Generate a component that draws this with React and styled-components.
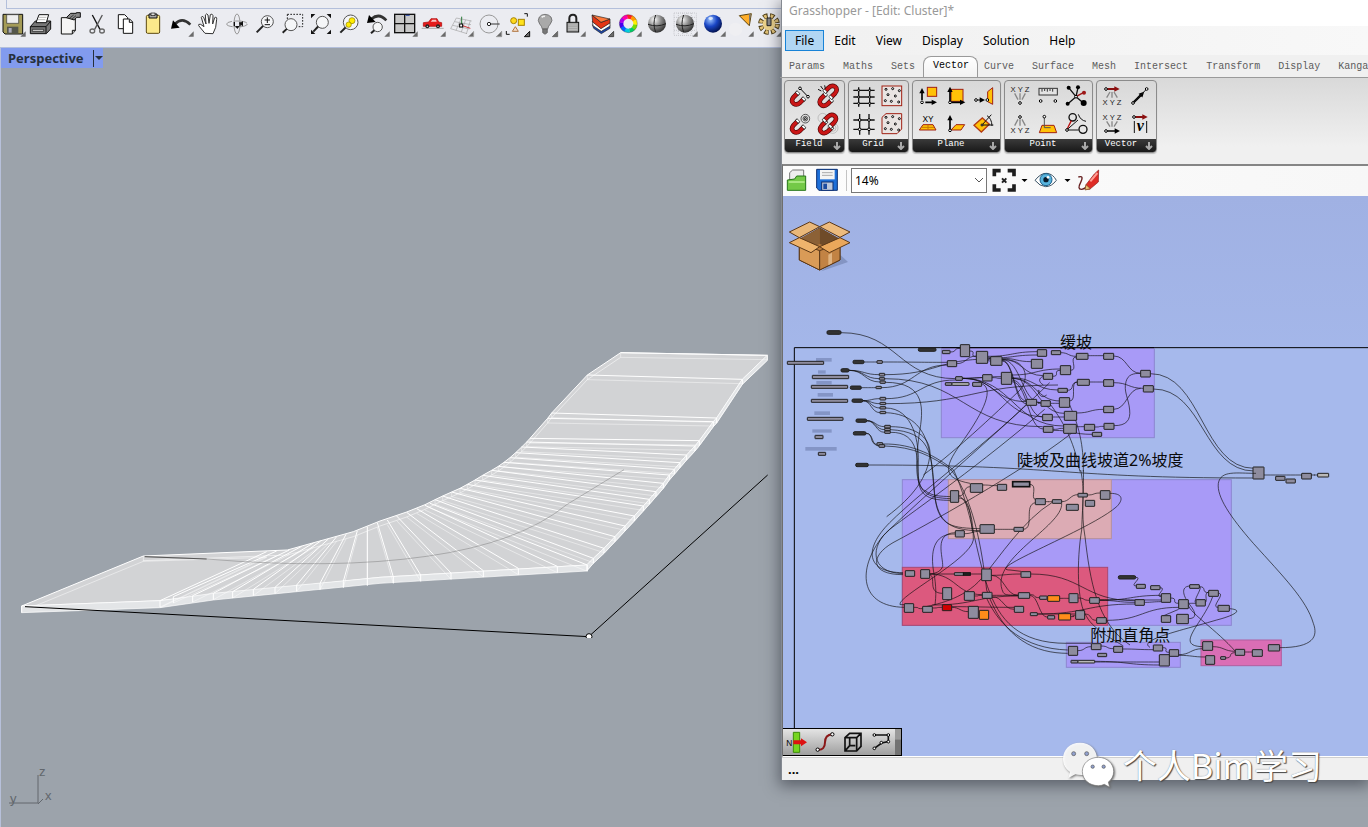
import React from 'react';
import styled, { createGlobalStyle } from 'styled-components';

const GlobalStyle = createGlobalStyle`
  *, *::before, *::after { box-sizing: border-box; }
  html, body { margin: 0; height: 100%; overflow: hidden; }
  body { font-family: "Noto Sans", "Noto Sans CJK SC", sans-serif; font-size: 13px; }
  button { font: inherit; color: inherit; border: 0; padding: 0; background: none; }
`;

const mono = '"Liberation Mono", "Noto Sans CJK SC", monospace';

const Desktop = styled.div`
  position: relative;
  display: flex;
  flex-direction: column;
  height: 100vh;
  overflow: hidden;
  background: #9ca3ab;
`;

/* ---------- modelling application ---------- */

const DockStrip = styled.div`
  height: 9px;
  flex: none;
  background: #ebecf1;
  padding-left: 6px;
  &::before {
    content: "";
    display: block;
    height: 9px;
    border-left: 1px solid #b3bfdb;
    border-bottom: 1px solid #b3bfdb;
  }
`;

const MainToolbar = styled.div`
  display: flex;
  flex: none;
  height: 39px;
  padding-top: 1px;
  background: #ebecf1;
  border-bottom: 1px solid #b3bfdb;
`;

const ToolButton = styled.button`
  flex: none;
  width: ${(p) => (p.$first ? 27 : 28)}px;
  height: 28px;
  display: flex;
  justify-content: flex-end;
  svg { flex: none; width: 28px; height: 28px; overflow: visible; }
`;

const Viewport = styled.main`
  flex: 1;
  position: relative;
  overflow: hidden;
  border-left: 1px solid #b7c0da;
`;

const ViewTitle = styled.div`
  display: inline-flex;
  align-items: center;
  height: 20px;
  padding-left: 7px;
  background: #829bee;
  color: #26303c;
  font-weight: 700;
`;

const ViewName = styled.span`
  width: 85px;
  line-height: 20px;
`;

const ViewMenuButton = styled.button`
  display: flex;
  align-items: center;
  width: 10px;
  height: 17px;
  border-left: 1px solid #26303c;
  svg { width: 9px; height: 5px; }
`;

const SceneDrawing = styled.svg`
  position: absolute;
  left: -1px;
  top: 0;
  width: 780px;
  height: 590px;
  pointer-events: none;
`;

const AxisDrawing = styled.svg`
  position: absolute;
  left: 0;
  bottom: 16px;
  width: 60px;
  height: 48px;
  text { font: 13px "Liberation Sans", sans-serif; fill: #62676d; }
`;

/* ---------- graph editor window ---------- */

const Window = styled.section`
  position: absolute;
  left: 781px;
  right: 0;
  top: 0;
  bottom: 47px;
  display: flex;
  flex-direction: column;
  background: #f0f0f0;
  border-left: 1px solid #858a92;
  box-shadow: 0 4px 14px 2px rgba(30, 34, 44, 0.5);
`;

const TitleBar = styled.header`
  flex: none;
  height: 26px;
  padding-left: 7px;
  line-height: 22px;
  background: #fff;
  color: #999;
  font-size: 12px;
  white-space: nowrap;
`;

const MenuBar = styled.nav`
  flex: none;
  display: flex;
  height: 29px;
  padding: 4px 3px;
  background: linear-gradient(90deg, #f0f0f0, #f8f8f8);
`;

const MenuItem = styled.button`
  height: 21px;
  padding: 0 9px;
  font-size: 12px;
  line-height: 19px;
  color: #000;
  border: 1px solid ${(p) => (p.$open ? '#1883d7' : 'transparent')};
  background: ${(p) => (p.$open ? '#b1d6f3' : 'transparent')};
`;

const TabBar = styled.div`
  flex: none;
  display: flex;
  height: 23px;
  margin-left: -2px;
  overflow: hidden;
  font-family: ${mono};
  font-size: 10px;
  border-bottom: 1px solid #9a9a9a;
`;

const Tab = styled.button`
  flex: none;
  padding: 0 9px;
  line-height: 23px;
  color: #5c5c5c;
  ${(p) => p.$active && `
    margin: 1px -3px 0 -1px;
    padding: 0 8px 0 9px;
    line-height: 18px;
    color: #000;
    background: linear-gradient(#fff, #f2f2f2);
    border: 1px solid #9a9a9a;
    border-bottom: 0;
    border-radius: 8px 8px 0 0;
    align-self: stretch;
    display: flex;
  `}
  &:last-child { padding-right: 0; }
`;

const Ribbon = styled.div`
  flex: none;
  display: flex;
  gap: 3px;
  height: 86px;
  padding: 2px;
  background: linear-gradient(#d9d9d9, #f0f0f0 80%);
`;

const Panel = styled.section`
  flex: none;
  height: 73px;
  padding: 1px 2px 0 1px;
  border: 1px solid #8b8b8b;
  border-radius: 4px;
  background: linear-gradient(#d8d8d8, #eee);
  overflow: hidden;
  box-shadow: 0 1px 1px rgba(0, 0, 0, 0.2);
`;

const PanelIcons = styled.div`
  display: grid;
  grid-template-columns: repeat(${(p) => p.$cols}, 28px);
  grid-auto-rows: 28px;
`;

const IconButton = styled.button`
  width: 28px;
  height: 28px;
  display: block;
  svg { display: block; width: 28px; height: 28px; overflow: visible; }
`;

const PanelFooter = styled.button`
  display: flex;
  width: calc(100% + 3px);
  margin: 1px -2px 0 -1px;
  height: 14px;
  padding-right: 3px;
  background: linear-gradient(#3a3a3a, #161616);
  color: #fff;
  font-family: ${mono};
  font-size: 9px;
  line-height: 11px;
  span { flex: 1; }
  svg { align-self: center; width: 8px; height: 8px; }
`;

const Workspace = styled.div`
  flex: 1;
  min-height: 0;
  display: flex;
  flex-direction: column;
  border-left: 1px solid #6e6e6e;
  border-top: 2px solid #858585;
  border-bottom: 1px solid #fff;
`;

const CanvasToolbar = styled.div`
  flex: none;
  display: flex;
  align-items: flex-start;
  height: 30px;
  padding-left: 3px;
  background: linear-gradient(90deg, #fcfcfc, #f7f7f7);
`;

const CanvasTool = styled.button`
  flex: none;
  width: ${(p) => p.$w}px;
  height: 28px;
  svg { display: block; width: 100%; height: 28px; }
`;

const Divider = styled.span`
  width: 1px;
  height: 21px;
  margin: 4px 4px 0;
  background: #c3c3c3;
`;

const ZoomField = styled.label`
  flex: none;
  position: relative;
  display: block;
  width: 136px;
  height: 25px;
  margin: 2px 3px 0 0;
  select {
    width: 100%;
    height: 100%;
    padding: 0 3px;
    appearance: none;
    border: 1px solid #777;
    border-radius: 0;
    background: #fff;
    color: #000;
    font: 12px "Noto Sans", sans-serif;
  }
  svg { position: absolute; right: 4px; top: 9px; width: 9px; height: 7px; pointer-events: none; }
`;

const Canvas = styled.div`
  flex: 1;
  min-height: 0;
  position: relative;
  overflow: hidden;
  background: linear-gradient(#a0b1e3, #a5b8eb 35%);
`;

const Graph = styled.svg`
  display: block;
  width: 585px;
  height: 560px;
  text {
    font: 400 48px "Noto Sans", "Noto Sans CJK SC", sans-serif;
    fill: #0a0a0a;
  }
`;

const QuickBar = styled.div`
  position: absolute;
  left: 0;
  bottom: 0;
  display: flex;
  height: 28px;
  border: 1px solid #000;
  border-left: 0;
  border-right: 0;
  background: linear-gradient(#e4e4e4, #9f9f9f);
`;

const QuickGrip = styled.span`
  width: 7px;
  border-right: 1px solid #000;
  background: linear-gradient(#9a9a9a 40%, #727272 41%);
`;

const StatusBar = styled.footer`
  flex: none;
  height: 23px;
  padding-left: 6px;
  line-height: 23px;
  border-top: 1px solid #cfcfcf;
  background: #f0f0f0;
  font-weight: 700;
`;

const Watermark = styled.div`
  position: absolute;
  right: 46px;
  bottom: 37px;
  display: flex;
  align-items: center;
  gap: 7px;
  color: #fff;
  font: 400 34px/50px "Noto Sans CJK SC", sans-serif;
  text-shadow: 1px 1px 1px #444, 0 0 1px #777;
  svg { width: 55px; height: 50px; filter: drop-shadow(1px 1px 1px #666); }
`;

/* ---------- main toolbar icons, drawn on an 84 unit cell ---------- */

const Corner = () => <path d="M80 64V80H64Z" fill="#6b6b6b" />;
const Lens = ({ x, y, r = 18, hx, hy }) => (
  <g>
    <circle cx={x} cy={y} r={r} fill="#f5f6f8" stroke="#555" strokeWidth="3" />
    <path d={`M${x - r * 0.7} ${y + r * 0.7}L${hx} ${hy}`} stroke="#222" strokeWidth="6" />
  </g>
);
const Sphere = ({ id, a, b, c, lines }) => (
  <g>
    <defs>
      <radialGradient id={id} cx=".35" cy=".28" r=".75">
        <stop offset="0" stopColor={a} /><stop offset=".5" stopColor={b} /><stop offset="1" stopColor={c} />
      </radialGradient>
    </defs>
    <circle cx="42" cy="41" r="27" fill={`url(#${id})`} />
    {lines && <path d="M38 15Q28 40 38 67M15 43Q42 53 69 41" fill="none" stroke="#222" strokeWidth="3" />}
  </g>
);
const wheel = ['#f22', '#f90', '#fe0', '#7d0', '#0c6', '#0cd', '#06f', '#40e', '#a0e', '#f0a'];

const tools = [
  ['Save', <g><path d="M12 13H71V72H18L12 66Z" fill="#a49b57" stroke="#111" strokeWidth="3" /><path d="M23 14H59V40H23Z" fill="#eee" stroke="#333" strokeWidth="2" /><path d="M24 50H58V71H24Z" fill="#55574c" /><path d="M29 54H38V68H29Z" fill="#aab" /><Corner /></g>],
  ['Print', <g stroke="#111" strokeWidth="3" strokeLinejoin="round"><path d="M10 50L25 33H71V57L58 71H10Z" fill="#777" /><path d="M10 50H57L71 34M57 50V70" fill="none" /><path d="M27 38L36 14H65L58 38Z" fill="#fff" /><path d="M36 22H58M33 29H55" stroke="#999" strokeWidth="2" /><path d="M16 58H50V64H16Z" fill="#ddd" strokeWidth="2" /></g>],
  ['Properties', <g stroke="#111" strokeWidth="3"><path d="M19 23H61V62L52 72H19Z" fill="#f5f5f5" /><path d="M61 61H52V72" fill="#bbb" /><path d="M34 23L47 10H64V8H76V22H65L58 30Z" fill="#888" /><path d="M44 24L56 15M51 27L63 17" strokeWidth="2" /></g>],
  ['Cut', <g fill="none" stroke="#111" strokeWidth="4"><path d="M28 15L51 58" /><path d="M58 15L35 58" stroke="#555" /><ellipse cx="28" cy="63" rx="7" ry="6" stroke="#666" /><ellipse cx="57" cy="63" rx="7" ry="6" stroke="#666" /></g>],
  ['Copy', <g fill="#fff" stroke="#111" strokeWidth="3"><path d="M22 14H41L50 23V56H22Z" /><path d="M37 27H56L65 36V70H37Z" /><path d="M55 28V37H65" fill="none" /></g>],
  ['Paste', <g stroke="#111" strokeWidth="3"><rect x="22" y="16" width="40" height="54" rx="4" fill="#fbe98b" stroke="#5d4a10" /><path d="M30 12H54V24H30Z" fill="#aaa" /><rect x="36" y="9" width="12" height="8" fill="#ddd" strokeWidth="2" /></g>],
  ['Undo', <g><path d="M24 42Q46 20 70 44" fill="none" stroke="#333" strokeWidth="8" /><path d="M12 56L18 31L38 53Z" fill="#000" /><Corner /></g>],
  ['Pan', <path d="M30 70L11 47Q9 41 17 43L27 50L19 22Q20 16 26 22L33 42L31 15Q35 8 39 15L42 40L46 14Q51 9 54 17L53 42L59 23Q66 19 65 28L62 52L54 71Z" fill="#fff" stroke="#333" strokeWidth="3" strokeLinejoin="round" />],
  ['Rotate view', <g fill="none" stroke="#999" strokeWidth="3"><ellipse cx="42" cy="42" rx="9" ry="30" /><ellipse cx="42" cy="42" rx="31" ry="9" strokeDasharray="40 6" /><path d="M34 36V49M51 36V49" stroke="#111" strokeWidth="4" /><path d="M60 33L48 41L60 49ZM36 48H50L43 57Z" fill="#111" stroke="none" /></g>],
  ['Zoom dynamic', <g><Lens x={49} y={35} hx={17} hy={67} /><path d="M49 22V39M41 30H57M41 44H57" stroke="#111" strokeWidth="3" /></g>],
  ['Zoom window', <g><Lens x={36} y={44} hx={11} hy={68} /><path d="M25 13H71V50H55M25 13V28" fill="none" stroke="#222" strokeWidth="3" strokeDasharray="5 4" /></g>],
  ['Zoom extents', <g><Lens x={46} y={37} hx={19} hy={65} /><path d="M12 12H25L12 25ZM72 12V25L59 12ZM12 72V59L25 72ZM72 72H59L72 59Z" fill="#111" /></g>],
  ['Zoom selected', <g><Lens x={47} y={37} r={22} hx={16} hy={68} /><circle cx="51" cy="32" r="9" fill="#ffec00" stroke="#8a7a00" strokeWidth="2" /><circle cx="41" cy="44" r="8" fill="#ffec00" stroke="#8a7a00" strokeWidth="2" /></g>],
  ['Undo view', <g><Lens x={44} y={51} r={14} hx={24} hy={70} /><path d="M25 27Q48 7 70 31" fill="none" stroke="#333" strokeWidth="8" /><path d="M12 39L18 15L38 36Z" fill="#000" /><Corner /></g>],
  ['Viewports', <g><rect x="11" y="13" width="60" height="55" fill="#c8c8c8" stroke="#111" strokeWidth="4" /><path d="M41 13V68M11 41H71" stroke="#111" strokeWidth="4" /><path d="M44 16H56" stroke="#24a" strokeWidth="3" /><Corner /></g>],
  ['Named views', <g><path d="M8 55H74" stroke="#aaa" strokeWidth="3" /><path d="M13 38L29 36L36 26H54L59 36L68 38V49H13Z" fill="#e51c1c" stroke="#a00" strokeWidth="2" /><path d="M35 35L40 29H51L53 35Z" fill="#f7c6c6" /><circle cx="25" cy="49" r="6" fill="#222" /><circle cx="57" cy="49" r="6" fill="#222" /><circle cx="25" cy="49" r="2" fill="#ddd" /><circle cx="57" cy="49" r="2" fill="#ddd" /><Corner /></g>],
  ['Construction plane', <g fill="none" stroke="#a3a3a3" strokeWidth="2"><path d="M28 24L11 56M42 27L27 61M56 29L43 66M70 32L58 72M28 24L74 33M23 35L72 44M17 46L67 57M11 56L60 71" /><path d="M44 43V20" stroke="#2a7a3a" strokeWidth="3" /><path d="M44 46L70 55" stroke="#c33" strokeWidth="3" /><rect x="38" y="42" width="9" height="9" fill="#fff" stroke="#000" strokeWidth="3" /><Corner /></g>],
  ['Object snap', <g fill="none" stroke="#999" strokeWidth="3"><circle cx="42" cy="42" r="27" /><path d="M42 42H74" stroke="#333" /><circle cx="42" cy="42" r="5" fill="#fff" stroke="#222" /><Corner /></g>],
  ['Select', <g fill="none" stroke="#111" strokeWidth="3"><circle cx="32" cy="32" r="9" fill="#ffd91c" stroke="#a78300" /><rect x="46" y="28" width="18" height="18" fill="#ffe21c" stroke="#a78300" /><path d="M37 50L46 64H28Z" fill="#f5ddc8" stroke="#b07542" /><path d="M64 11H73V20M10 63V73H20" /><Corner /></g>],
  ['Hide', <g stroke="#555" strokeWidth="2"><path d="M34 57Q32 48 26 42Q18 31 25 21Q31 13 42 13Q53 13 60 21Q67 31 58 42Q52 48 50 57Z" fill="#a9a9a9" /><path d="M35 57H49V68L42 73L35 68Z" fill="#777" /><path d="M32 22Q36 18 42 19" stroke="#eee" strokeWidth="5" fill="none" /><Corner /></g>],
  ['Lock', <g><path d="M31 39V25Q31 14 42 14Q52 14 52 25V39" fill="none" stroke="#222" strokeWidth="6" /><rect x="24" y="37" width="35" height="29" fill="#a5a5a5" stroke="#111" strokeWidth="3" /><path d="M28 45H55M28 52H55M28 59H55" stroke="#ccc" strokeWidth="2" /><Corner /></g>],
  ['Layers', <g stroke="#222" strokeWidth="2"><path d="M16 44L41 62L69 47V55L43 71L20 55Z" fill="#1c46ac" /><path d="M16 34L41 54L69 38V48L43 64L18 47Z" fill="#fff" /><path d="M15 15L42 37L69 27V39L42 56L17 36Z" fill="#e23616" /><path d="M15 15L42 37L69 27Z" fill="#ff7a3c" /><Corner /></g>],
  ['Object colour', <g>{wheel.map((c, i) => <circle key={c} cx="40" cy="41" r="21" fill="none" stroke={c} strokeWidth="12" strokeDasharray="14 118" transform={`rotate(${i * 36 - 100} 40 41)`} />)}<circle cx="40" cy="41" r="27" fill="none" stroke="#333" strokeWidth="1" /><Corner /></g>],
  ['Wireframe display', <Sphere id="sg1" a="#fff" b="#8a8a8a" c="#333" lines />],
  ['Shaded display', <g><path d="M9 9H76V76H9ZM9 22H76M9 35H76M9 48H76M9 61H76M22 9V76M35 9V76M48 9V76M61 9V76" fill="none" stroke="#c6c7cc" strokeWidth="3" strokeDasharray="3 3" /><Sphere id="sg2" a="#fff" b="#8a8a8a" c="#333" lines /><Corner /></g>],
  ['Render', <g><Sphere id="sg3" a="#9cc4ff" b="#1945c4" c="#03124e" /><ellipse cx="35" cy="25" rx="7" ry="5" fill="#fff" opacity=".7" /><Corner /></g>],
  ['Directional light', <g><ellipse cx="26" cy="58" rx="20" ry="20" fill="#efeff2" /><path d="M37 17L73 11L67 47Z" fill="#ffae2a" stroke="#5b430d" strokeWidth="3" /><path d="M66 14L72 12L66 46Z" fill="#777" /><Corner /></g>],
  ['Options', <g><circle cx="42" cy="42" r="25" fill="none" stroke="#4a3a13" strokeWidth="15" strokeDasharray="13 7" /><circle cx="42" cy="42" r="25" fill="none" stroke="#e3c377" strokeWidth="10" strokeDasharray="8 12" strokeDashoffset="-2" /><circle cx="42" cy="42" r="19" fill="#ecd28a" /><path d="M36 24H48V47H36Z" fill="#888" stroke="#222" strokeWidth="3" /><Corner /></g>],
];

/* ---------- component icons ---------- */

const Dot = ({ x, y, r = 4 }) => <circle cx={x} cy={y} r={r} fill="#fff" stroke="#000" strokeWidth="3" />;
const Magnet = ({ x = 0, y = 0, flip }) => {
  const d = 'M34 34L23 45Q13 57 23 65Q32 71 42 62L52 52';
  return (
    <g fill="none" transform={`translate(${x} ${y})${flip ? ' rotate(180 42 42)' : ''}`}>
      <path d={d} stroke="#4b0808" strokeWidth="14" />
      <path d={d} stroke="#c91616" strokeWidth="10" />
      <path d="M38 30L32 36M56 48L50 54" stroke="#222" strokeWidth="14" />
      <path d="M37 31L33 35M55 49L51 53" stroke="#fff" strokeWidth="10" />
    </g>
  );
};
const Arrow = ({ x1, y1, x2, y2, c = '#000', w = 5 }) => {
  const a = (Math.atan2(y2 - y1, x2 - x1) * 180) / Math.PI;
  return (
    <g>
      <path d={`M${x1} ${y1}L${x2} ${y2}`} stroke={c} strokeWidth={w} />
      <path d="M8 0L-8 -8V8Z" fill={c} transform={`translate(${x2} ${y2}) rotate(${a})`} />
    </g>
  );
};
const Letters = ({ y }) => (
  <text x="42" y={y} textAnchor="middle" fontFamily="Liberation Sans, sans-serif" fontSize="23" fill="#222">X Y Z</text>
);
const gridDots = [[24, 22], [44, 20], [64, 26], [30, 38], [52, 42], [22, 56], [40, 58], [62, 60]];
const red = '#a12013';
const amber = '#ffc107';
const Rays = ({ y1, y2 }) => (
  <path d={`M42 ${y1}V${y2}M26 ${y1}L36 ${y2}M58 ${y1}L48 ${y2}`} fill="none" stroke="#888" strokeWidth="4" />
);
const RaysUp = ({ y1, y2 }) => (
  <path d={`M42 ${y1}V${y2}M36 ${y1}L26 ${y2}M48 ${y1}L58 ${y2}`} fill="none" stroke="#888" strokeWidth="4" />
);

const panels = [
  { name: 'Field', cols: 2, icons: [
    ['Line charge', <g><Magnet /><path d="M42 19L66 44" stroke="#000" strokeWidth="3" /><Dot x={42} y={19} /><Dot x={66} y={44} /></g>],
    ['Break field', <g><Magnet x={-1} y={4} /><Magnet flip x={2} y={-5} /><path d="M12 22L22 27M20 12L27 22M32 10L34 20" stroke="#111" strokeWidth="3" /></g>],
    ['Point charge', <g><g fill="none" stroke="#555" strokeWidth="3"><circle cx="58" cy="26" r="13" /><circle cx="58" cy="26" r="7" /></g><Dot x={58} y={26} r={3} /><Magnet /></g>],
    ['Merge fields', <g><g fill="none" stroke="#aaa" strokeWidth="2"><circle cx="26" cy="24" r="14" /><circle cx="56" cy="54" r="16" /><circle cx="56" cy="54" r="10" /></g><Magnet y={2} /><Magnet flip y={-2} /></g>],
  ] },
  { name: 'Grid', cols: 2, icons: [
    ['Rectangular grid', <g fill="none" stroke="#111" strokeWidth="4"><path d="M10 25H74M10 45H74M10 64H74M26 16V74M59 16V74" />{[25, 45, 64].map((y) => <g key={y}><Dot x={26} y={y} r={3} /><Dot x={59} y={y} r={3} /></g>)}</g>],
    ['Populate 2D', <g><rect x="12" y="12" width="59" height="59" fill="#e9e4e2" stroke={red} strokeWidth="3" />{gridDots.map(([x, y]) => <Dot key={x} x={x} y={y} r={3} />)}</g>],
    ['Square grid', <g fill="none" stroke="#111" strokeWidth="4"><path d="M10 30H74M10 58H74M29 12V74M57 12V74" /><Dot x={29} y={30} /><Dot x={57} y={30} /><Dot x={29} y={58} /><Dot x={57} y={58} /></g>],
    ['Populate 3D', <g><path d="M24 11H71V57L57 71H12V22Z" fill="#e9e4e2" stroke={red} strokeWidth="3" />{gridDots.map(([x, y]) => <Dot key={x} x={x} y={y} r={3} />)}</g>],
  ] },
  { name: 'Plane', cols: 3, icons: [
    ['Construct plane', <g><rect x="40" y="16" width="28" height="27" fill={amber} stroke={red} strokeWidth="3" /><Arrow x1={24} y1={54} x2={24} y2={26} /><Arrow x1={34} y1={61} x2={61} y2={61} /><Dot x={24} y={61} /></g>],
    ['Deconstruct plane', <g><rect x="27" y="22" width="36" height="36" fill={amber} stroke={red} strokeWidth="3" /><Arrow x1={24} y1={61} x2={24} y2={22} /><Arrow x1={24} y1={61} x2={62} y2={61} /><Dot x={24} y={61} /></g>],
    ['Plane normal', <g><path d="M53 29L68 17V67L53 59Z" fill={amber} stroke={red} strokeWidth="3" /><Arrow x1={18} y1={54} x2={37} y2={54} w={3} /><Dot x={18} y={54} /><Dot x={52} y={54} /></g>],
    ['XY plane', <g><text x="42" y="36" textAnchor="middle" fontFamily="Liberation Sans, sans-serif" fontSize="25">XY</text><path d="M27 44H57L66 60H16Z" fill={amber} stroke={red} strokeWidth="3" /><path d="M24 52H60M42 44V60" stroke="#c77600" strokeWidth="3" /></g>],
    ['Plane origin', <g><path d="M42 44H68L57 60H27Z" fill={amber} stroke={red} strokeWidth="3" /><Arrow x1={24} y1={61} x2={24} y2={23} /><Dot x={24} y={61} /></g>],
    ['Rotate plane', <g><path d="M12 46L37 24L58 43L34 66Z" fill={amber} stroke="#b33b12" strokeWidth="4" /><path d="M36 45L64 14M36 45H70M51 17Q65 25 66 48" fill="none" stroke="#111" strokeWidth="3" /><Dot x={36} y={45} r={3} /></g>],
  ] },
  { name: 'Point', cols: 3, icons: [
    ['Construct point', <g><Letters y={30} /><Rays y1={34} y2={53} /><Dot x={42} y={63} /></g>],
    ['Distance', <g><rect x="15" y="19" width="55" height="20" fill="#e3e3e3" stroke="#333" strokeWidth="3" /><path d="M24 21V29M32 21V27M40 21V29M48 21V27M56 21V29" stroke="#333" strokeWidth="3" /><Dot x={20} y={57} /><Dot x={64} y={57} /></g>],
    ['Closest point', <g><path d="M42 44L20 17M42 44L48 17M42 44L17 66M42 44L64 63" stroke="#111" strokeWidth="4" /><path d="M42 44L64 32" stroke="#9d1717" strokeWidth="4" />{[[20, 17], [48, 16], [17, 65]].map(([x, y]) => <circle key={x} cx={x} cy={y} r="6" />)}<circle cx="65" cy="63" r="9" /><circle cx="66" cy="32" r="6" fill="#9d1717" /><Dot x={42} y={44} /></g>],
    ['Deconstruct point', <g><Dot x={42} y={21} /><RaysUp y1={28} y2={47} /><Letters y={68} /></g>],
    ['Pull point', <g><path d="M24 46H60L68 68H16Z" fill={amber} stroke={red} strokeWidth="3" /><path d="M31 20V53H50" fill="none" stroke="#555" strokeWidth="3" /><Dot x={31} y={20} /></g>],
    ['Project point', <g fill="none" stroke="#111" strokeWidth="4"><circle cx="32" cy="22" r="11" /><circle cx="63" cy="58" r="12" /><path d="M14 60L28 32" stroke="#b11" /><path d="M14 60L48 30M14 60H50M49 13Q55 31 72 34" strokeWidth="3" /><Dot x={15} y={60} /></g>],
  ] },
  { name: 'Vector', cols: 2, icons: [
    ['Vector XYZ', <g><Arrow x1={24} y1={21} x2={57} y2={21} c="#8b1010" w={6} /><Dot x={24} y={21} /><RaysUp y1={30} y2={47} /><Letters y={69} /></g>],
    ['Vector 2Pt', <g><Arrow x1={21} y1={63} x2={49} y2={35} w={7} /><path d="M21 63L62 21" stroke="#111" strokeWidth="3" /><Dot x={21} y={63} /><Dot x={62} y={21} /></g>],
    ['Deconstruct vector', <g><Letters y={30} /><Rays y1={34} y2={50} /><Arrow x1={24} y1={63} x2={58} y2={63} /><Dot x={24} y={63} /></g>],
    ['Vector length', <g><Arrow x1={24} y1={21} x2={57} y2={21} c="#8b1010" w={6} /><Dot x={24} y={21} /><path d="M25 33V69M62 33V69" stroke="#111" strokeWidth="3" /><text x="43" y="64" textAnchor="middle" fontFamily="Liberation Serif, serif" fontStyle="italic" fontWeight="700" fontSize="48">v</text></g>],
  ] },
];

const quickIcons = [
  ['Named input', <g><text x="10" y="50" fontFamily="Liberation Sans, sans-serif" fontSize="25">N</text><path d="M31 10H50V70H31Z" fill="#76d520" stroke="#3c8c08" strokeWidth="3" /><path d="M31 34H54V28L72 40L54 52V46H31Z" fill="#d11" /></g>],
  ['Curve', <g><path d="M20 62Q42 64 42 40Q42 18 64 16" fill="none" stroke="#8a1818" strokeWidth="6" /><Dot x={20} y={62} r={5} /><Dot x={64} y={16} r={5} /></g>],
  ['Box', <path d="M18 26L32 13H66V52L53 66H18ZM18 26H53V66M53 26L66 13M32 28V50H49M32 50L19 65" fill="none" stroke="#111" strokeWidth="5" />],
  ['Polyline', <g><path d="M22 18H64V38L44 42L22 58" fill="none" stroke="#111" strokeWidth="5" /><Dot x={22} y={18} /><Dot x={64} y={18} /><Dot x={64} y={38} /><Dot x={43} y={41} /><Dot x={22} y={58} /></g>],
];

/* ---------- node graph, three drawing units to a screen pixel ---------- */

const wire = ([x1, y1, x2, y2]) => {
  const k = Math.max(Math.abs(x2 - x1) / 2, 24);
  return `M${x1} ${y1}C${x1 + k} ${y1} ${x2 - k} ${y2} ${x2} ${y2}`;
};

const fills = { grey: '#8e8c9e', dark: '#333', orange: '#ff8c1a', red: '#d10000', light: '#b9b8b8' };

const Nodes = ({ items, fill = 'grey' }) => items.map(([x, y, w, h, f]) => (
  <rect key={`${x}-${y}`} x={x} y={y} width={w} height={h} rx={fill === 'dark' ? 4 : 1} fill={fills[f || fill]} stroke="#222" strokeWidth="3" />
));
const Wires = ({ items, extra }) => (
  <g fill="none" stroke="#111" strokeOpacity=".66" strokeWidth="3">
    {items.map((w) => <path key={w.join()} d={wire(w)} />)}
    {extra && <path d={extra} />}
  </g>
);

const inputs = {
  pills: [[141, 32, 42, 11], [415, 84, 53, 10], [219, 121, 33, 10], [183, 146, 24, 10], [211, 198, 33, 10], [216, 237, 32, 10], [228, 297, 32, 10], [220, 335, 38, 10], [227, 430, 38, 10]],
  relays: [[291, 122, 16, 8], [298, 160, 16, 8], [298, 173, 16, 7], [300, 183, 16, 7], [288, 199, 16, 7], [300, 232, 17, 8], [300, 247, 17, 7], [300, 260, 17, 7], [300, 274, 17, 7], [314, 316, 17, 8], [314, 325, 17, 7], [314, 333, 17, 7], [291, 368, 17, 8], [297, 374, 17, 8]],
  sliders: [[22, 124, 109, 9], [97, 166, 109, 10], [94, 196, 109, 9], [94, 238, 109, 9], [82, 292, 107, 9], [105, 346, 24, 10], [115, 397, 22, 9]],
  notes: [[108, 114, 47, 11], [114, 151, 23, 10], [109, 183, 46, 10], [113, 219, 46, 11], [103, 274, 47, 11], [97, 328, 58, 10], [76, 381, 94, 11]],
  wires: [
    [183, 38, 527, 176], [252, 126, 291, 126], [307, 126, 503, 127], [207, 151, 298, 164], [207, 151, 298, 176], [207, 151, 300, 186],
    [244, 203, 288, 203], [304, 203, 503, 135], [314, 164, 630, 117], [314, 176, 788, 320], [248, 242, 300, 236], [248, 242, 300, 251],
    [248, 242, 300, 264], [248, 242, 300, 278], [260, 302, 314, 320], [260, 302, 314, 329], [260, 302, 314, 337], [258, 340, 291, 373],
    [258, 340, 297, 378], [317, 251, 834, 195], [317, 236, 527, 180], [265, 435, 1419, 474],
  ],
  extra: 'M316 187C440 187 430 270 418 340C404 440 408 500 435 512C460 530 480 528 512 530M317 264C400 264 420 370 414 440C412 520 440 533 512 536M317 278C470 284 450 440 466 540C478 620 520 624 600 626M331 320C420 320 450 360 450 400C445 470 400 530 320 590M331 329C450 335 455 400 462 500C468 600 500 632 600 632M331 337C420 335 412 420 415 480C420 530 450 541 512 541M309 372C400 370 470 410 521 450M314 378C400 380 460 410 514 450',
};

const upper = {
  nodes: [[37, 76, 23, 10], [91, 59, 28, 36], [52, 107, 28, 18], [139, 79, 34, 36], [182, 95, 34, 26], [77, 155, 20, 11], [46, 173, 20, 8], [66, 173, 51, 8, 'light'], [128, 172, 27, 12], [158, 149, 28, 19], [214, 142, 31, 36], [322, 74, 28, 20], [364, 77, 28, 12], [304, 103, 34, 27], [340, 145, 28, 18], [391, 122, 31, 27], [439, 85, 35, 18], [521, 85, 30, 18], [632, 136, 29, 20], [640, 182, 30, 19], [442, 163, 36, 18], [521, 164, 30, 20], [384, 190, 28, 12], [289, 223, 31, 18], [333, 227, 28, 17], [388, 218, 31, 29], [521, 244, 30, 19], [403, 259, 37, 27], [338, 268, 29, 19], [401, 298, 38, 27], [340, 304, 29, 18], [463, 298, 31, 18], [522, 295, 30, 18], [487, 322, 28, 12]],
  wires: [
    [60, 81, 91, 70], [80, 116, 139, 93], [119, 78, 139, 95], [97, 160, 158, 158], [173, 97, 182, 108], [173, 94, 322, 80], [173, 100, 322, 90], [216, 100, 304, 110], [216, 103, 340, 152], [216, 106, 289, 228], [216, 108, 289, 236], [216, 104, 333, 233],
    [245, 158, 384, 195], [245, 160, 391, 228], [245, 150, 391, 132], [245, 165, 338, 276], [245, 170, 340, 312], [245, 160, 403, 265], [320, 232, 333, 235], [361, 235, 388, 235], [97, 160, 289, 230], [97, 160, 338, 275], [97, 160, 401, 303], [97, 160, 214, 155],
    [392, 83, 439, 94], [422, 136, 439, 96], [368, 154, 391, 136], [474, 92, 521, 92], [551, 93, 632, 145], [478, 171, 521, 171], [551, 173, 640, 190], [412, 196, 442, 172], [419, 228, 442, 170], [440, 264, 521, 253], [551, 253, 632, 190], [439, 305, 463, 305], [494, 306, 522, 304], [369, 313, 401, 310], [369, 276, 403, 276], [369, 316, 487, 328], [186, 158, 214, 160],
  ],
  extra: 'M155 176C190 190 170 250 90 360C40 430 40 460 120 475M552 302C590 302 602 285 599 255C596 220 580 200 588 170C594 148 610 145 632 145M419 240C460 330 460 400 460 440M361 238C430 330 440 400 450 440M216 104C290 100 300 160 270 195C150 310 60 390 -20 450M340 180C325 170 325 160 340 154M329 200C320 180 325 230 350 210',
};

const middle = {
  nodes: [[181, 62, 25, 35], [241, 41, 37, 26], [322, 43, 28, 18], [436, 86, 30, 18], [487, 89, 28, 11], [529, 103, 36, 18], [564, 70, 28, 11], [586, 91, 28, 18], [631, 62, 29, 26], [270, 164, 43, 26], [372, 172, 28, 12], [196, 182, 27, 19], [46, 302, 28, 17], [92, 299, 27, 26], [193, 308, 28, 8], [275, 297, 29, 35], [393, 305, 29, 17], [158, 353, 27, 36], [223, 365, 30, 26], [277, 367, 29, 18], [385, 368, 34, 17], [449, 378, 22, 10], [473, 377, 36, 17, 'orange'], [537, 371, 27, 27], [599, 383, 29, 17], [43, 401, 28, 26], [98, 409, 29, 18], [157, 404, 28, 18, 'red'], [235, 409, 30, 36], [268, 421, 28, 27, 'orange'], [373, 409, 28, 18], [421, 428, 21, 9], [473, 437, 21, 10], [506, 431, 36, 19, 'orange'], [557, 422, 27, 26], [620, 443, 29, 17]],
  wires: [
    [206, 78, 241, 50], [278, 45, 322, 47], [466, 95, 487, 95], [515, 95, 564, 74], [592, 75, 631, 69], [313, 178, 372, 178], [223, 191, 270, 184],
    [119, 312, 275, 312], [304, 316, 393, 312], [304, 316, 385, 376], [253, 378, 277, 376], [306, 376, 385, 376], [419, 374, 449, 383], [419, 376, 473, 442], [509, 385, 537, 385], [564, 384, 599, 391], [71, 412, 98, 416], [127, 414, 157, 412], [185, 412, 235, 425], [306, 380, 373, 418], [185, 410, 373, 412], [127, 405, 385, 378], [442, 432, 557, 432], [542, 440, 557, 437], [584, 432, 620, 451], [422, 312, 735, 392], [119, 312, 277, 374],
    [628, 391, 735, 397], [628, 389, 814, 390], [628, 391, 814, 376], [442, 432, 735, 402], [649, 451, 866, 412],
  ],
  extra: 'M419 43C445 43 420 86 436 88M400 178C435 175 400 105 436 98M660 70C700 70 700 90 680 110C600 180 280 300 360 300L393 304M487 97C400 150 330 260 275 325C220 390 130 405 98 412M515 100C520 170 290 270 340 368C345 376 360 376 385 376M206 76C240 100 250 150 250 210C240 270 20 380 30 404H43M196 192C140 190 120 230 130 300C140 350 138 380 135 405M196 188C130 190 160 260 158 290Q150 310 119 312M119 314C140 320 110 370 158 370M206 84C245 84 240 150 248 188M191 0C300 240 240 520 530 520H605M184 0C260 100 280 280 290 360C340 510 440 550 533 550M572 0C584 60 578 90 575 180C560 270 560 400 590 440C610 480 690 520 700 528M580 0C583 60 572 130 585 200C600 330 620 460 720 525M290 385C330 470 400 535 533 540',
};

const lower = {
  nodes: [[259, 103, 27, 12], [302, 107, 28, 12], [334, 131, 28, 26], [255, 149, 28, 17], [386, 149, 29, 27], [438, 149, 28, 19], [419, 104, 29, 11], [476, 121, 29, 18], [504, 166, 34, 18], [334, 197, 28, 20], [380, 193, 35, 28], [55, 289, 28, 27], [124, 281, 29, 18], [191, 289, 27, 18], [143, 310, 27, 10], [63, 331, 21, 8], [84, 331, 50, 8, 'light'], [310, 285, 28, 18], [358, 299, 28, 20], [328, 314, 30, 34], [458, 275, 30, 26], [467, 317, 27, 26], [512, 320, 15, 8], [556, 298, 28, 18], [607, 299, 30, 20], [655, 284, 34, 19]],
  wires: [
    [257, 82, 259, 108], [330, 113, 334, 140], [362, 144, 386, 160], [283, 157, 334, 155], [415, 160, 438, 160], [448, 110, 476, 128], [505, 130, 504, 172], [83, 302, 124, 290], [153, 288, 191, 296], [218, 297, 310, 299], [338, 293, 358, 307], [134, 334, 328, 345], [134, 336, 328, 336], [386, 314, 458, 296], [386, 316, 467, 321], [488, 290, 556, 304], [527, 324, 556, 308], [584, 306, 607, 306],
  ],
  extra: 'M488 140C460 220 370 288 458 290M538 176C590 180 540 200 500 210C400 240 260 270 300 292M689 293C790 293 805 260 790 220C770 150 700 80 610 -20C540 -100 500 -160 505 -200C512 -240 560 -230 618 -230M419 108C390 110 400 140 420 165C440 190 440 206 415 206M448 110C460 110 430 150 436 158M415 165C420 190 500 240 556 304M386 178L334 200M466 158C474 150 460 130 476 126',
};

/* wires that leave the upper cluster and loop back into the two lower ones */
const returnWires = 'M740 615C640 720 420 880 320 980C240 1060 250 1130 360 1130M880 700C760 800 480 960 330 1040C260 1080 260 1136 360 1136M800 560C680 680 420 900 300 1020C220 1120 230 1232 364 1234M785 640C600 800 400 940 320 1000C260 1050 260 1130 360 1133';

function GraphDrawing() {
  return (
    <Graph viewBox="0 0 1755 1680" role="img" aria-label="Node graph">
      <path d="M34 1680V455H1755V1680Z" fill="#a6b9ec" />
      <path d="M34 1680V455H1755" fill="none" stroke="#000" strokeWidth="3" />
      <g strokeWidth="3">
        <rect x="475" y="457" width="639" height="268" fill="#a89af7" stroke="#8c86cf" />
        <rect x="358" y="851" width="987" height="437" fill="#a89af7" stroke="#8c86cf" />
        <rect x="496" y="851" width="489" height="177" fill="#dcabb4" stroke="#b5909b" />
        <rect x="358" y="1114" width="616" height="174" fill="#dc597e" stroke="#a84a74" />
        <rect x="850" y="1339" width="342" height="75" fill="#a89af7" stroke="#8c86cf" />
        <rect x="1254" y="1332" width="241" height="77" fill="#da6eb5" stroke="#b05f9f" />
      </g>
      <path d="M475 455H1114" stroke="#000" strokeWidth="3" />
      <Wires items={[]} extra={returnWires} />
      <g transform="translate(-9 372)">
        <Wires items={inputs.wires} extra={inputs.extra} />
        <g fill="#8495c6">{inputs.notes.map(([x, y, w, h]) => <rect key={y} x={x} y={y} width={w} height={h} />)}</g>
        <Nodes items={inputs.sliders} />
        <Nodes items={inputs.relays} />
        <Nodes items={inputs.pills} fill="dark" />
      </g>
      <g transform="translate(441 387)">
        <Wires items={upper.wires} extra={upper.extra} />
        <Wires items={[[661, 146, 972, 430], [670, 192, 972, 438]]} />
        <Nodes items={upper.nodes} />
        <Nodes items={[[969, 426, 33, 36], [1037, 454, 28, 12], [1068, 462, 28, 12], [1115, 445, 29, 17]]} />
        <Nodes items={[[1163, 445, 33, 11, 'light']]} />
        <Wires items={[[1002, 450, 1115, 450], [1144, 450, 1163, 450]]} />
      </g>
      <g transform="translate(321 822)">
        <Wires items={middle.wires} extra={middle.extra} />
        <Nodes items={middle.nodes} />
        <rect x="368" y="35" width="51" height="15" fill="#8e8c9e" stroke="#111" strokeWidth="5" />
        <rect x="220" y="308" width="21" height="8" fill="#222" stroke="#111" strokeWidth="3" />
      </g>
      <g transform="translate(801 1062)">
        <Wires items={lower.wires} extra={lower.extra} />
        <Nodes items={lower.nodes} />
        <Nodes items={[[205, 77, 52, 10]]} fill="dark" />
      </g>
      <text x="831" y="455">缓坡</text>
      <text x="702" y="809">陡坡及曲线坡道2%坡度</text>
      <text x="922" y="1335">附加直角点</text>
    </Graph>
  );
}

/* ---------- ramp model ---------- */

const fanRibs = [
  [800, 65, 480, 212], [830, 63, 520, 200], [868, 60, 578, 197], [905, 49, 640, 190], [940, 39, 698, 185], [962, 33, 760, 178], [985, 27, 825, 172], [1010, 20, 890, 165], [1038, 13, 960, 160],
  [1072, 2, 1030, 154], [1102, -10, 1102, 148], [1132, -22, 1180, 141], [1162, -30, 1262, 135], [1190, -42, 1353, 129], [1220, -53, 1450, 122], [1250, -64, 1555, 115], [1275, -74, 1672, 109], [1290, -80, 1762, 105],
];
const leftTop = [[165, 479], [188, 468], [215, 456], [240, 445], [262, 433], [285, 420], [308, 406], [335, 391], [355, 379], [372, 367], [390, 353], [407, 338], [425, 321], [440, 306], [450, 295], [503, 235], [515, 219], [622, 105], [722, 38]];
const rightTop = [[640, 655], [672, 625], [705, 590], [735, 558], [763, 528], [790, 498], [808, 478], [828, 455], [850, 430], [868, 405], [883, 388], [900, 368], [920, 345], [945, 318], [958, 302], [1000, 245], [1010, 234], [1087, 118], [1162, 46]];

function RampScene() {
  const top = leftTop.map(([x, y]) => `L${x} ${y}`).join('');
  const side = [...rightTop].reverse().map(([x, y]) => `L${x} ${y}`).join('');
  const sideLow = rightTop.map(([x, y]) => `L${x} ${y + 15}`).join('');
  return (
    <SceneDrawing viewBox="0 0 2340 1770" role="img" aria-label="Ramp model">
      <g transform="translate(1140 876)" fill="none" stroke="#fff" strokeWidth="3" strokeLinejoin="round">
        <path d={`M-1075 798L-710 648L-278 630L-80 575L0 543L80 516L135 494${top}${side}L620 675L0 712L-660 782L-1075 798Z`} fill="#d2d3d5" />
        <path d={`M-1075 798L-660 782L-500 760L0 712L620 675${rightTop.map(([x, y]) => `L${x} ${y}`).join('')}V58${[...rightTop].reverse().map(([x, y]) => `L${x} ${y + 15}`).join('')}L620 693L0 730L-500 780L-660 803L-1075 818Z`} fill="#e3e5e7" strokeWidth="2" />
        <path d={`M-710 662L-278 645L-80 590L0 558L80 531L135 508${leftTop.map(([x, y]) => `L${x} ${y + 14}`).join('')}`} strokeWidth="2" opacity=".8" />
        <path d="M-710 648V664L-1040 800M-710 664L-340 652L-660 803" strokeWidth="2" opacity=".7" />
        {leftTop.map(([x, y], i) => {
          const [rx, ry] = rightTop[i];
          return (
            <g key={x}>
              <path d={`M${x} ${y}L${rx} ${ry}V${ry + 15}`} strokeWidth="3" />
              <path d={`M${x} ${y}V${y + 14}L${rx} ${ry + 13}`} strokeWidth="2" opacity=".65" />
            </g>
          );
        })}
        <path d={`M620 675V693${sideLow}`} strokeWidth="2" />
      </g>
      <g transform="translate(0 1446)" fill="none" stroke="#fff" strokeLinejoin="round">
        {fanRibs.map(([x1, y1, x2, y2]) => (
          <g key={x2}>
            <path d={`M${x1} ${y1}L${x2} ${y2}V${y2 + 19}`} strokeWidth="3" />
            <path d={`M${x1} ${y1 + 14}L${x2} ${y2 + 19}`} strokeWidth="2" opacity=".7" />
          </g>
        ))}
        <path d="M65 228V248" strokeWidth="3" />
      </g>
      <path d="M434 1526L620 1533Q1000 1565 1280 1525T1700 1370L1872 1265" fill="none" stroke="#777" strokeOpacity=".7" strokeWidth="2" />
      <path d="M434 1526L620 1533" stroke="#555" strokeWidth="3" />
      <path d="M75 1676L1766 1766L2303 1281" fill="none" stroke="#000" strokeWidth="3" />
      <circle cx="1767" cy="1766" r="9" fill="#fff" stroke="#000" strokeWidth="3" />
    </SceneDrawing>
  );
}

function ModelViewport() {
  return (
    <Viewport>
      <ViewTitle>
        <ViewName>Perspective</ViewName>
        <ViewMenuButton aria-label="Viewport menu"><svg viewBox="0 0 9 5"><path d="M1 0H9L5 4Z" fill="#26303c" /></svg></ViewMenuButton>
      </ViewTitle>
      <RampScene />
      <AxisDrawing viewBox="0 0 60 48">
        <path d="M37 12V40H8M37 41L42 36" fill="none" stroke="#62676d" />
        <text x="38" y="13">z</text><text x="44" y="37">x</text><text x="9" y="40">y</text>
      </AxisDrawing>
    </Viewport>
  );
}

const CardboardBox = styled.svg`
  position: absolute;
  left: 5px;
  top: 24px;
  width: 66px;
  height: 54px;
`;

function BoxIcon() {
  return (
    <CardboardBox viewBox="0 0 198 162" aria-label="Cluster">
      <path d="M100 154L180 126L158 106Z" fill="#66759f" opacity=".5" />
      <g stroke="#5b3818" strokeWidth="3" strokeLinejoin="round">
        <path d="M34 60L95 24L156 60V120L95 150L34 120Z" fill="#b77a3d" />
        <path d="M34 56L95 24V72L62 84Z" fill="#8c6136" stroke="none" />
        <path d="M95 24L156 56L128 84L95 72Z" fill="#6f4b29" stroke="none" />
        <path d="M34 70L95 92V150L34 120Z" fill="#d99b57" />
        <path d="M95 92L156 70V120L95 150Z" fill="#c28344" />
        <path d="M65 6L95 20L34 53L4 36Z" fill="#eab87a" />
        <path d="M124 6L186 36L156 52L95 20Z" fill="#edbb7d" />
        <path d="M34 53L95 80L69 98L4 68Z" fill="#eeb36c" />
        <path d="M156 53L186 68L124 98L95 80Z" fill="#eaa75b" />
      </g>
      <path d="M121 104L132 98V130L121 136Z" fill="#e0b482" />
    </CardboardBox>
  );
}

const Drop = () => (
  <CanvasTool $w={13} aria-label="More options"><svg viewBox="0 0 12 28"><path d="M3 13H9L6 16Z" /></svg></CanvasTool>
);

const menu = ['File', 'Edit', 'View', 'Display', 'Solution', 'Help'];
const tabs = ['Params', 'Maths', 'Sets', 'Vector', 'Curve', 'Surface', 'Mesh', 'Intersect', 'Transform', 'Display', 'Kanga'];

function GraphWindow() {
  return (
    <Window>
      <TitleBar>Grasshopper - [Edit: Cluster]*</TitleBar>
      <MenuBar>{menu.map((m) => <MenuItem key={m} $open={m === 'File'}>{m}</MenuItem>)}</MenuBar>
      <TabBar role="tablist">
        {tabs.map((t) => <Tab key={t} role="tab" aria-selected={t === 'Vector'} $active={t === 'Vector'}>{t}</Tab>)}
      </TabBar>
      <Ribbon>
        {panels.map((p) => (
          <Panel key={p.name}>
            <PanelIcons $cols={p.cols}>
              {p.icons.map(([name, art]) => <IconButton key={name} aria-label={name}><svg viewBox="0 0 84 84">{art}</svg></IconButton>)}
            </PanelIcons>
            <PanelFooter><span>{p.name}</span><svg viewBox="0 0 8 8"><path d="M4 0V7M1 4L4 7L7 4" stroke="#aaa" strokeWidth="2" fill="none" /></svg></PanelFooter>
          </Panel>
        ))}
      </Ribbon>
      <Workspace>
        <CanvasToolbar>
          <CanvasTool $w={30} aria-label="Open">
            <svg viewBox="0 0 90 84"><path d="M11 20L20 12H53V60H11Z" fill="#eee" stroke="#777" strokeWidth="3" /><path d="M4 42L26 39L32 30H59V73H4Z" fill="#74c947" stroke="#26761a" strokeWidth="3" /><path d="M8 48H56" stroke="#b4ec8c" strokeWidth="5" /></svg>
          </CanvasTool>
          <CanvasTool $w={26} aria-label="Save">
            <svg viewBox="0 0 78 84"><path d="M2 10H64V73H9L2 66Z" fill="#1d6fd8" stroke="#0b2f73" strokeWidth="3" /><rect x="12" y="12" width="44" height="28" fill="#f4f4f4" /><path d="M18 20H50M18 28H50" stroke="#aaa" strokeWidth="3" /><rect x="17" y="48" width="34" height="25" fill="#bcc7da" stroke="#0b2f73" strokeWidth="3" /><rect x="22" y="53" width="11" height="16" fill="#1b4ba0" /></svg>
          </CanvasTool>
          <Divider />
          <ZoomField>
            <select aria-label="Zoom" defaultValue="14%"><option>14%</option><option>50%</option><option>100%</option></select>
            <svg viewBox="0 0 9 7"><path d="M1 1L5 5L9 1" fill="none" stroke="#555" /></svg>
          </ZoomField>
          <CanvasTool $w={28} aria-label="Zoom extents">
            <svg viewBox="0 0 84 84"><path d="M13 31V14H32M53 14H72V31M72 55V72H53M32 72H13V55" fill="none" stroke="#1d1d1d" strokeWidth="11" /><path d="M36 37L49 50M49 37L36 50" stroke="#222" strokeWidth="6" /></svg>
          </CanvasTool>
          <Drop />
          <CanvasTool $w={30} aria-label="Preview">
            <svg viewBox="0 0 90 84"><path d="M12 43Q30 20 48 22Q66 24 76 43Q62 62 44 62Q26 61 12 43Z" fill="#fff" stroke="#3b5365" strokeWidth="3" /><circle cx="45" cy="41" r="18" fill="#57b3dd" stroke="#1b5f8a" strokeWidth="3" /><circle cx="45" cy="41" r="8" fill="#081b2c" /><circle cx="51" cy="34" r="4" fill="#fff" /></svg>
          </CanvasTool>
          <Drop />
          <CanvasTool $w={28} aria-label="Sketch">
            <svg viewBox="0 0 84 84"><path d="M13 33Q31 27 20 49Q9 70 22 70Q32 70 42 57" fill="none" stroke="#662020" strokeWidth="4" /><path d="M36 56L61 24L74 12L73 48L47 70L35 70Z" fill="#df2b25" stroke="#8b1717" strokeWidth="2" /><path d="M49 46L70 21" stroke="#ff9d93" strokeWidth="6" /><path d="M36 56L49 68L33 72Z" fill="#ebc17a" stroke="#754b1a" strokeWidth="2" /></svg>
          </CanvasTool>
        </CanvasToolbar>
        <Canvas>
          <GraphDrawing />
          <BoxIcon />
          <QuickBar>
            {quickIcons.map(([name, art]) => <IconButton key={name} aria-label={name}><svg viewBox="0 0 84 84">{art}</svg></IconButton>)}
            <QuickGrip />
          </QuickBar>
        </Canvas>
      </Workspace>
      <StatusBar>...</StatusBar>
    </Window>
  );
}

export default function App() {
  return (
    <Desktop>
      <GlobalStyle />
      <DockStrip />
      <MainToolbar>
        {tools.map(([name, art], i) => (
          <ToolButton key={name} $first={i === 0} aria-label={name}><svg viewBox="0 0 84 84">{art}</svg></ToolButton>
        ))}
      </MainToolbar>
      <ModelViewport />
      <GraphWindow />
      <Watermark>
        <svg viewBox="0 0 165 150">
          <path d="M57 8C25 8 6 30 6 57C6 74 14 87 27 96L22 114L43 103Q50 105 62 105C94 105 108 80 108 57C108 30 88 8 57 8Z" fill="#fff" opacity=".9" />
          <path d="M112 52C84 52 64 71 64 94C64 119 85 137 112 137Q122 137 130 133L146 142L142 126Q158 114 158 94C158 71 138 52 112 52Z" fill="#fff" stroke="#777" strokeWidth="2" />
          <g fill="#90a0ce" stroke="#555" strokeWidth="2"><circle cx="38" cy="41" r="6" /><circle cx="77" cy="41" r="6" /><circle cx="95" cy="80" r="5" /><circle cx="128" cy="80" r="5" /></g>
        </svg>
        <span>个人Bim学习</span>
      </Watermark>
    </Desktop>
  );
}
